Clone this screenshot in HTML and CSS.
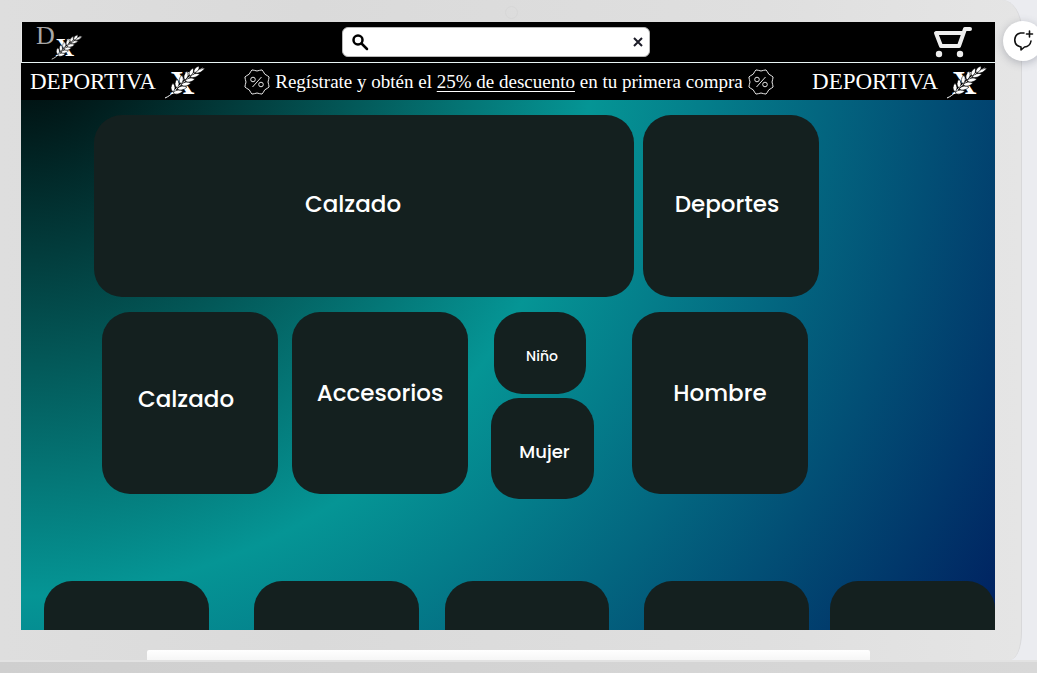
FILE: index.html
```html
<!DOCTYPE html>
<html lang="es">
<head>
<meta charset="utf-8">
<meta name="viewport" content="width=device-width, initial-scale=1">
<title>Deportiva X</title>
<link rel="stylesheet" href="styles.css">
</head>
<body>
<svg class="defs" aria-hidden="true">
  <defs>
    <symbol id="wheat" viewBox="0 0 42 34">
      <text class="wheat-x" x="6" y="29">X</text>
      <path d="M12 25L33 7" stroke="#000" stroke-width="6" fill="none"/>
      <path d="M1 33C8 30 10 26 14 22L30 8L39 3" stroke="#fff" stroke-width="1" fill="none"/>
      <g fill="#fff" stroke="#000" stroke-width=".6">
        <path d="M9 27q-4-4 0-9q4 5 0 9z"/>
        <path d="M13 23q-4-4 0-9q4 5 0 9z"/>
        <path d="M17 19q-4-4 1-9q3 5-1 9z"/>
        <path d="M21 15q-3-4 2-9q3 5-2 9z"/>
        <path d="M26 11q-3-4 3-8q2 5-3 8z"/>
        <path d="M30 8q-1-5 5-7q1 5-5 7z"/>
        <path d="M9 28q4-5 10-2q-5 5-10 2z"/>
        <path d="M13 24q4-5 10-2q-5 5-10 2z"/>
        <path d="M17 20q4-5 10-2q-5 5-10 2z"/>
        <path d="M21 16q4-5 10-2q-5 5-10 2z"/>
        <path d="M26 12q4-5 10-3q-5 5-10 3z"/>
        <path d="M31 8q4-5 10-5q-4 6-10 5z"/>
      </g>
    </symbol>
    <symbol id="percent" viewBox="0 0 28 28">
      <path d="M25.700 16.700Q27.200 19.500 24.200 20.400Q21.300 21.300 20.400 24.200Q19.500 27.200 16.700 25.700Q14 24.300 11.300 25.700Q8.500 27.200 7.600 24.200Q6.700 21.300 3.800 20.400Q.8 19.500 2.300 16.700Q3.700 14 2.300 11.300Q.8 8.500 3.800 7.600Q6.700 6.700 7.600 3.800Q8.500 .8 11.300 2.300Q14 3.700 16.700 2.300Q19.500 .8 20.400 3.800Q21.300 6.700 24.200 7.600Q27.200 8.500 25.700 11.300Q24.300 14 25.700 16.700Z"/>
      <path d="M18.500 9L9.500 19"/>
      <circle cx="10" cy="11.500" r="2.300"/>
      <circle cx="18" cy="16.500" r="2.300"/>
    </symbol>
  </defs>
</svg>

<div class="laptop">
  <span class="camera"></span>
  <div class="screen">
    <header class="topbar">
      <a class="logo" href="#" aria-label="Deportiva X"><span class="logo-d">D</span><svg class="logo-x"><use href="#wheat"/></svg></a>
      <form class="search">
        <svg class="search-icon" viewBox="0 0 18 18" aria-hidden="true"><circle cx="7" cy="7" r="4.500"/><path d="M10.500 10.500L16 16"/></svg>
        <input type="text" aria-label="Buscar">
        <button class="clear" type="reset" aria-label="Borrar"><svg viewBox="0 0 10 10"><path d="M1 1L9 9M9 1L1 9"/></svg></button>
      </form>
      <a class="cart" href="#" aria-label="Carrito">
        <svg viewBox="0 0 40 32"><path d="M37 3H32L26 20H8L3 7H30"/><circle cx="6" cy="28" r="3.200"/><circle cx="27" cy="28" r="3.200"/></svg>
      </a>
    </header>

    <div class="promo">
      <div class="brand"><span>DEPORTIVA</span><svg><use href="#wheat"/></svg></div>
      <div class="offer">
        <svg class="seal" aria-hidden="true"><use href="#percent"/></svg>
        <p>Regístrate y obtén el <a href="#">25% de descuento</a> en tu primera compra</p>
        <svg class="seal" aria-hidden="true"><use href="#percent"/></svg>
      </div>
      <div class="brand"><span>DEPORTIVA</span><svg><use href="#wheat"/></svg></div>
    </div>

    <main class="catalog">
      <div class="row featured">
        <a class="card wide" href="#">Calzado</a>
        <a class="card" href="#">Deportes</a>
      </div>
      <div class="row categories">
        <a class="card" href="#">Calzado</a>
        <a class="card raised" href="#">Accesorios</a>
        <div class="stack">
          <a class="card kids" href="#">Niño</a>
          <a class="card women" href="#">Mujer</a>
        </div>
        <a class="card raised" href="#">Hombre</a>
      </div>
      <div class="shelf">
        <div class="tile"></div><div class="tile"></div><div class="tile"></div><div class="tile"></div><div class="tile"></div>
      </div>
    </main>
  </div>
  <div class="foot"></div>
</div>
<div class="base"></div>
<button class="comment" type="button" aria-label="Añadir comentario">
  <svg viewBox="0 0 22 22"><path d="M12 3H8.500A7 7 0 0 0 7.500 16.500L9 17V20L12.500 17A7 7 0 0 0 19 11"/><path d="M17.500 1V7M14.500 4H20.500"/></svg>
</button>
</body>
</html>
```

FILE: styles.css
```css
* { box-sizing: border-box; }

body {
  margin: 0;
  min-height: 100vh;
  display: flex;
  flex-direction: column;
  position: relative;
  overflow-x: hidden;
  background: #ebecf0;
  font-family: Poppins, Inter, sans-serif;
}

a { color: inherit; }
p { margin: 0; }
svg { display: block; }

.defs { position: absolute; width: 0; height: 0; }

.laptop {
  flex: 1;
  display: flex;
  flex-direction: column;
  position: relative;
  margin-right: 15px;
  padding: 22px 26px 0 21px;
  background: linear-gradient(90deg, #dedede, #dadada 30%, #dfdfdf 75%, #e5e5e5);
  border-right: 1px solid #d8d8da;
  border-radius: 0 20px 12px 0 / 0 30px 28px 0;
}

.camera {
  position: absolute;
  top: 6px;
  left: calc(50% - 6px);
  width: 13px;
  height: 13px;
  border: 1px solid #d7d7d7;
  border-radius: 50%;
}

.screen {
  flex: 1;
  display: flex;
  flex-direction: column;
  background: radial-gradient(circle farthest-corner at 0 0, #000, #059595 50%, #002060);
}

.topbar {
  display: grid;
  grid-template-columns: 306fr 308fr 323fr;
  align-items: center;
  height: 41px;
  padding: 0 22px 0 14px;
  background: #000;
  border-left: 1px solid #e8e8e8;
  border-bottom: 1px solid #e8f4f4;
}

.logo { display: flex; height: 38px; text-decoration: none; }

.logo-d {
  color: #a8a8a8;
  font: 26px/26px "Liberation Serif", serif;
}

.logo-x { width: 32px; height: 28px; margin: 10px 0 0 -4px; }

.wheat-x { font: bold 34px "Liberation Serif", serif; fill: #fff; }

.search {
  display: flex;
  align-items: center;
  height: 30px;
  padding: 0 6px 0 8px;
  background: #fff;
  border: 1px solid #b8b8b8;
  border-radius: 6px;
}

.search-icon {
  width: 18px;
  height: 18px;
  fill: none;
  stroke: #000;
  stroke-width: 2.5;
  stroke-linecap: round;
}

.search input {
  flex: 1;
  min-width: 0;
  padding: 0 8px;
  border: 0;
  outline: 0;
  background: none;
  font: 14px Inter, sans-serif;
}

.clear { padding: 0; border: 0; background: none; }

.clear svg {
  width: 10px;
  height: 10px;
  fill: none;
  stroke: #1c1c28;
  stroke-width: 2;
}

.cart { justify-self: end; }

.cart svg {
  width: 40px;
  height: 32px;
  fill: none;
  stroke: #eee;
  stroke-width: 4;
  stroke-linecap: round;
  stroke-linejoin: round;
}

.cart circle { fill: #eee; stroke: none; }

.promo {
  display: flex;
  align-items: center;
  justify-content: space-between;
  height: 37px;
  padding: 0 7px 0 9px;
  overflow: hidden;
  background: #000;
  color: #fff;
}

.brand {
  display: flex;
  align-items: center;
  gap: 8px;
  font: 23px/32px "Liberation Serif", serif;
}

.brand svg { width: 42px; height: 34px; }

.offer {
  display: flex;
  align-items: center;
  gap: 4px;
  white-space: nowrap;
  font: 19px/24px "Liberation Serif", serif;
}

.offer a { text-underline-offset: 3px; text-decoration-thickness: 1px; }

.seal {
  width: 28px;
  height: 28px;
  fill: none;
  stroke: #e6e6e6;
  stroke-width: 1;
}

.catalog { flex: 1; display: flex; flex-direction: column; padding-top: 15px; }

.row { display: grid; margin-bottom: 15px; }

.featured {
  grid-template-columns: 540fr 176fr;
  gap: 9px;
  padding: 0 176px 0 73px;
}

.categories {
  grid-template-columns: 176fr 176fr 136fr 176fr;
  gap: 14px;
  padding: 0 187px 0 81px;
}

.card {
  min-width: 0;
  height: 182px;
  display: flex;
  align-items: center;
  justify-content: center;
  padding: 0 8px 8px 0;
  background: #14201f;
  border-radius: 28px;
  color: #fff;
  font-size: 23px;
  font-weight: 500;
  line-height: 32px;
  text-decoration: none;
}

.featured .card { padding-bottom: 4px; }

.featured .wide { padding-right: 22px; }

.raised { padding: 0 0 20px; }

.stack {
  display: flex;
  flex-direction: column;
  gap: 4px;
  padding: 0 24px 0 9px;
}

.stack .card { padding: 6px 0 0 4px; }

.stack .kids { height: 82px; margin: 0 8px 0 3px; font-size: 14px; }

.stack .women { height: 101px; font-size: 18px; }

.shelf {
  flex: 1;
  display: flex;
  gap: 21px;
  min-height: 48px;
  margin-top: 67px;
  padding-left: 23px;
}

.tile {
  flex: 1;
  background: #14201f;
  border-radius: 28px 28px 0 0;
}

.tile:nth-child(1) { margin-right: 24px; }
.tile:nth-child(2) { margin-right: 5px; }
.tile:nth-child(3) { margin-right: 14px; }

.foot {
  height: 10px;
  margin: 20px 125px 0 126px;
  background: linear-gradient(#fff, #f6f6f6);
  border-radius: 2px 2px 0 0;
}

.base {
  height: 13px;
  background: linear-gradient(90deg, #cfcfcf, #d8d8d8);
  border-top: 2px solid #e2e2e2;
}

.comment {
  position: absolute;
  top: 21px;
  right: -6px;
  width: 40px;
  height: 40px;
  padding: 0 0 0 9px;
  border: 0;
  border-radius: 50%;
  background: #fff;
  box-shadow: 0 2px 8px rgba(60, 65, 85, .3);
}

.comment svg {
  width: 22px;
  height: 22px;
  fill: none;
  stroke: #111;
  stroke-width: 1.6;
  stroke-linecap: round;
  stroke-linejoin: round;
}
```
